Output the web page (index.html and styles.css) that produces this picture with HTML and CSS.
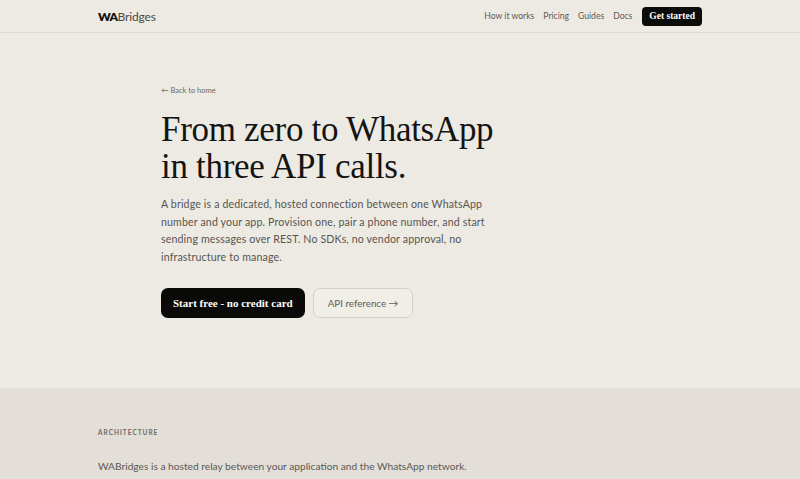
FILE: index.html
```html
<!DOCTYPE html>
<html lang="en">
<head>
	<meta charset="UTF-8">
	<title>WABridges - Getting started</title>
	<link rel="stylesheet" href="styles.css">
</head>
<body>
	<header class="topbar">
		<div class="topbar-inner">
			<a class="logo" href="#"><b>WA</b>Bridges</a>
			<nav class="nav">
				<a href="#">How it works</a>
				<a href="#">Pricing</a>
				<a href="#">Guides</a>
				<a href="#">Docs</a>
				<a class="nav-cta" href="#">Get started</a>
			</nav>
		</div>
	</header>

	<section class="hero">
		<a class="back" href="#">&larr; Back to home</a>
		<h1>From zero to WhatsApp<br>in three API calls.</h1>
		<p class="lead">A bridge is a dedicated, hosted connection between one WhatsApp number and your app. Provision one, pair a phone number, and start sending messages over REST. No SDKs, no vendor approval, no infrastructure to manage.</p>
		<div class="actions">
			<a class="btn btn-dark" href="#">Start free - no credit card</a>
			<a class="btn btn-ghost" href="#">API reference &rarr;</a>
		</div>
	</section>

	<section class="arch">
		<div class="arch-inner">
			<h2 class="eyebrow">Architecture</h2>
			<p>WABridges is a hosted relay between your application and the WhatsApp network.<br>Your app sends REST calls; we run the session and forward events back to you.</p>
		</div>
	</section>
</body>
</html>
```

FILE: styles.css
```css
body {
	margin: 0;
	background: #edeae3;
	color: #1a1a18;
	font-family: "Lato", "Liberation Sans", sans-serif;
}
a {
	color: inherit;
	text-decoration: none;
}

/* 顶部导航 */
.topbar {
	border-bottom: 1px solid #dedad2;
}
.topbar-inner {
	width: 604px;
	height: 32px;
	margin: 0 auto;
	display: flex;
	align-items: center;
	justify-content: space-between;
}
.logo {
	font-size: 12px;
	color: #4a4944;
	letter-spacing: -.15px;
}
.logo b {
	color: #111;
	font-weight: 800;
	letter-spacing: -.6px;
}
.nav {
	display: flex;
	align-items: center;
	gap: 9px;
	font-size: 8.6px;
	color: #5c5a55;
}
.nav-cta {
	margin-left: 1px;
	padding: 4px 7px 5px;
	background: #0b0b0a;
	color: #fff;
	border-radius: 4px;
	font: bold 9.5px "Liberation Serif", serif;
}

/* 首屏 */
.hero {
	width: 478px;
	margin: 0 auto;
	padding: 53px 0 70px;
}
.back {
	display: block;
	font-size: 7.5px;
	color: #6b6964;
}
.hero h1 {
	margin: 16px 0 11px;
	font: 400 35px/37px "Liberation Serif", serif;
	letter-spacing: -.3px;
	color: #141412;
}
.lead {
	margin: 0;
	width: 336px;
	font-size: 10.6px;
	line-height: 17.6px;
	color: #57554f;
	letter-spacing: .15px;
}
.actions {
	display: flex;
	gap: 8px;
	margin-top: 22px;
}
.btn {
	display: inline-flex;
	align-items: center;
	height: 30px;
	box-sizing: border-box;
	border-radius: 7px;
}
.btn-dark {
	padding: 0 12px;
	background: #0a0a09;
	color: #fff;
	font: bold 11px "Liberation Serif", serif;
}
.btn-ghost {
	padding: 0 14px;
	border: 1px solid #d6d1c6;
	background: #f1eee8;
	color: #5e5c57;
	font-size: 9.8px;
}

/* 架构说明 */
.arch {
	background: #e3dfd8;
	padding: 41px 0 40px;
}
.arch-inner {
	width: 604px;
	margin: 0 auto;
}
.eyebrow {
	margin: 0 0 22px;
	font-size: 6.5px;
	font-weight: 700;
	letter-spacing: 1px;
	text-transform: uppercase;
	color: #6a6862;
}
.arch p {
	margin: 0;
	font-size: 10.2px;
	line-height: 17px;
	color: #5a5853;
}
```
